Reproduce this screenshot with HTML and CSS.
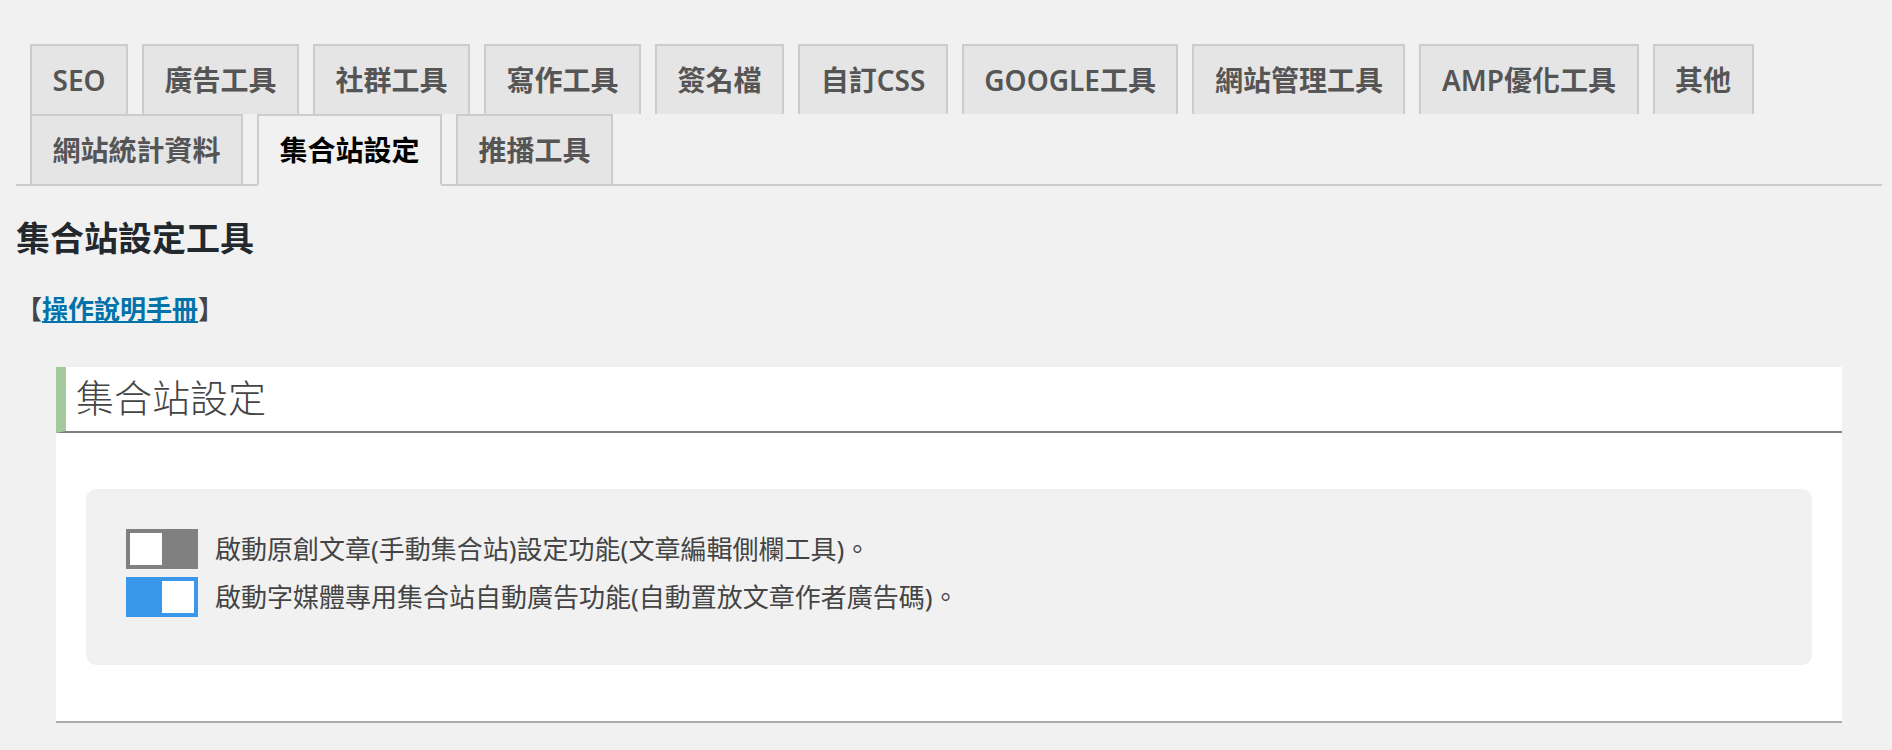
FILE: index.html
```html
<!DOCTYPE html>
<html lang="zh-Hant">
  <head>
    <meta charset="utf-8">
    <title>集合站設定工具</title>
    <link rel="stylesheet" href="styles.css">
  </head>
  <body>
    <div class="wrap">
      <nav class="nav-tabs">
        <a class="nav-tab" href="#">SEO</a>
        <a class="nav-tab" href="#">廣告工具</a>
        <a class="nav-tab" href="#">社群工具</a>
        <a class="nav-tab" href="#">寫作工具</a>
        <a class="nav-tab" href="#">簽名檔</a>
        <a class="nav-tab" href="#">自訂CSS</a>
        <a class="nav-tab" href="#">GOOGLE工具</a>
        <a class="nav-tab" href="#">網站管理工具</a>
        <a class="nav-tab" href="#">AMP優化工具</a>
        <a class="nav-tab" href="#">其他</a>
        <a class="nav-tab" href="#">網站統計資料</a>
        <a class="nav-tab active" href="#">集合站設定</a>
        <a class="nav-tab" href="#">推播工具</a>
      </nav>

      <h2 class="page-title">集合站設定工具</h2>
      <p class="manual">【<a href="#">操作說明手冊</a>】</p>

      <div class="panel">
        <h3 class="panel-title">集合站設定</h3>
        <div class="panel-body">
          <div class="options">
            <label class="option">
              <input type="checkbox" />
              <span class="switch"></span>
              <span class="option-text">啟動原創文章(手動集合站)設定功能(文章編輯側欄工具)。</span>
            </label>
            <label class="option">
              <input type="checkbox" checked />
              <span class="switch"></span>
              <span class="option-text">啟動字媒體專用集合站自動廣告功能(自動置放文章作者廣告碼)。</span>
            </label>
          </div>
        </div>
      </div>
    </div>
  </body>
</html>
```

FILE: styles.css
```css
body {
  margin: 0;
  background-color: #f1f1f1;
  font-family: "Noto Sans", "Noto Sans CJK TC", sans-serif;
  color: #444;
}

.wrap {
  padding: 26px 10px 0 16px;
}

.nav-tabs {
  display: flex;
  flex-wrap: wrap;
  align-items: flex-start;
  padding-top: 18px;
  border-bottom: 2px solid #ccc;
}

.nav-tab {
  margin-left: 14px;
  padding: 10px 20.5px;
  border: 2px solid #ccc;
  border-bottom: none;
  background: #e5e5e5;
  color: #555;
  font-size: 28px;
  font-weight: 600;
  line-height: 48px;
  text-decoration: none;
  white-space: nowrap;
}

.nav-tab.active {
  background: #f1f1f1;
  color: #000;
  border-bottom: 2px solid #f1f1f1;
  margin-bottom: -2px;
}

.page-title {
  margin: 30px 0 0;
  font-size: 34px;
  font-weight: 600;
  line-height: 44px;
  color: #23282d;
}

.manual {
  margin: 30px 0 0;
  font-size: 26px;
  font-weight: 600;
  line-height: 39px;
  color: #444;
}

.manual a {
  color: #0073aa;
  text-decoration: underline;
}

.panel {
  margin: 38px 40px 0;
  background: white;
  border-bottom: 2px solid #aaa;
}

.panel-title {
  margin: 0;
  padding: 0 0 4px 10px;
  border-left: 10px solid #a3c99c;
  border-bottom: 2px solid #808080;
  font-size: 38px;
  font-weight: 300;
  line-height: 60px;
  color: #444;
}

.panel-body {
  padding: 56px 30px;
}

.options {
  display: flex;
  flex-direction: column;
  gap: 8px;
  padding: 40px 40px 48px;
  background: #f1f1f1;
  border-radius: 10px;
}

.option {
  display: flex;
  align-items: center;
  cursor: pointer;
}

.option input {
  display: none;
}

.switch {
  display: flex;
  box-sizing: border-box;
  width: 72px;
  height: 40px;
  padding: 4px;
  background: #808080;
}

.switch::before {
  content: "";
  width: 32px;
  height: 32px;
  background: white;
}

.option input:checked + .switch {
  justify-content: flex-end;
  background: #3a97e9;
}

.option-text {
  margin-left: 17px;
  font-size: 26px;
  line-height: 40px;
  color: #444;
}
```
